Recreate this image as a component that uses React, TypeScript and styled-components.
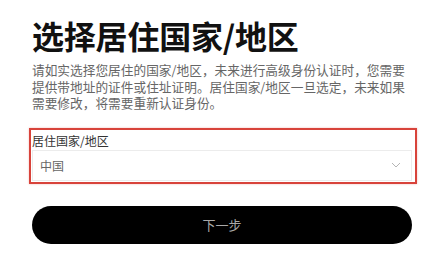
import React from 'react';
import styled, { createGlobalStyle } from 'styled-components';

const GlobalStyle = createGlobalStyle`
  html, body {
    margin: 0;
    padding: 0;
    background: #ffffff;
  }
  body {
    font-family: "Noto Sans CJK SC", "Noto Sans", sans-serif;
  }
`;

const Page = styled.div`
  width: 445px;
  height: 270px;
  box-sizing: border-box;
  padding: 16px 33px 0 32px;
  display: flex;
  flex-direction: column;
  background: #fff;
  overflow: hidden;
`;

const Title = styled.h1`
  margin: 0;
  font-size: 32px;
  line-height: 38px;
  font-weight: 700;
  color: #111;
  letter-spacing: -0.2px;
`;

const Intro = styled.p`
  margin: 8px 0 0;
  font-size: 12.7px;
  line-height: 16.5px;
  color: #666;
`;

const Highlight = styled.div<{ $on?: boolean }>`
  margin: 16px -5px 0 -3px;
  padding: 2px 3px 1px 1px;
  border: 2px solid ${(p) => (p.$on ? '#d8433b' : 'transparent')};
  box-shadow: ${(p) => (p.$on ? '0 0 2px rgba(216, 67, 59, 0.35)' : 'none')};
`;

const Label = styled.div`
  font-size: 12px;
  line-height: 17px;
  color: #333;
`;

const Select = styled.div`
  margin-top: 1px;
  height: 31px;
  box-sizing: border-box;
  border: 1px solid #ececec;
  display: flex;
  align-items: center;
  justify-content: space-between;
  padding: 0 10px 0 7px;
  font-size: 12px;
  color: #666;
`;

const Chevron = styled.svg`
  width: 10px;
  height: 6px;
  color: #b5b5b5;
`;

const NextButton = styled.button`
  margin-top: 22px;
  height: 38px;
  width: 100%;
  border: none;
  border-radius: 19px;
  background: #000;
  color: #a8a8a8;
  font-family: inherit;
  font-size: 13px;
  cursor: pointer;
`;

export default function App() {
  return (
    <Page>
      <GlobalStyle />
      <Title>选择居住国家/地区</Title>
      <Intro>
        请如实选择您居住的国家/地区，未来进行高级身份认证时，您需要提供带地址的证件或住址证明。居住国家/地区一旦选定，未来如果需要修改，将需要重新认证身份。
      </Intro>
      <Highlight $on>
        <Label>居住国家/地区</Label>
        <Select>
          <span>中国</span>
          <Chevron viewBox="0 0 10 6" fill="none">
            <path d="M1 1l4 4 4-4" stroke="currentColor" strokeWidth="1" />
          </Chevron>
        </Select>
      </Highlight>
      <NextButton>下一步</NextButton>
    </Page>
  );
}
